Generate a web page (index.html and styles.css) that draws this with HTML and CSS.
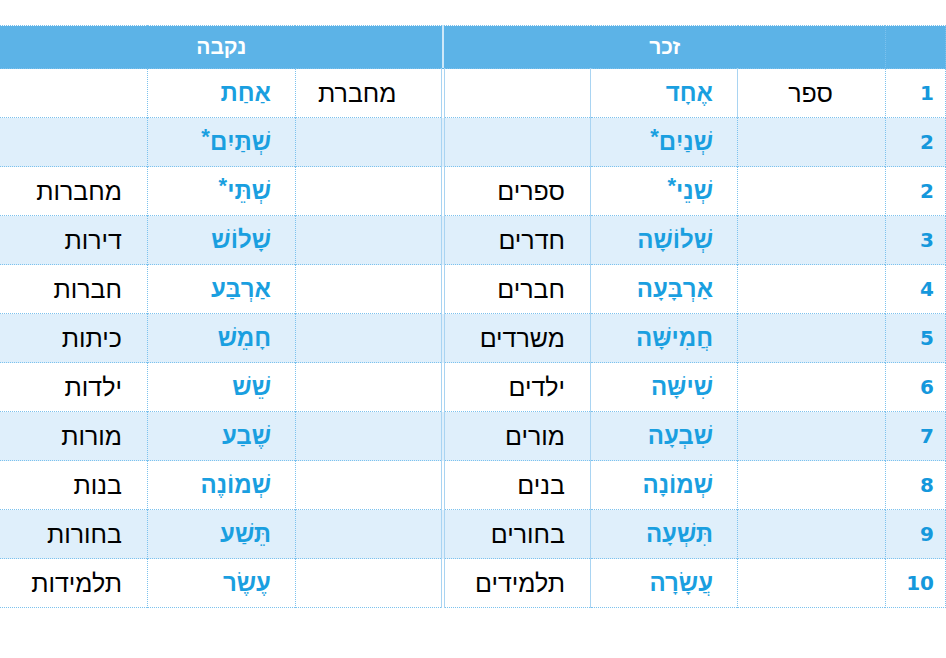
FILE: index.html
```html
<!DOCTYPE html>
<html lang="he" dir="rtl">
<head>
<meta charset="utf-8">
<title>מספרים</title>
<link rel="stylesheet" href="styles.css">
</head>
<body>
<table class="nums">
  <colgroup>
    <col class="c-num">
    <col class="c-m1">
    <col class="c-m2">
    <col class="c-m3">
    <col class="c-f1">
    <col class="c-f2">
    <col class="c-f3">
  </colgroup>
  <thead>
    <tr>
      <th class="num"></th>
      <th colspan="3" class="grp masc">זכר</th>
      <th colspan="3" class="grp">נקבה</th>
    </tr>
  </thead>
  <tbody>
    <tr>
      <td class="num">1</td>
      <td class="noun sg-m">ספר</td>
      <td class="hn m">אֶחָד</td>
      <td class="noun m3"></td>
      <td class="noun sg-f">מחברת</td>
      <td class="hn">אַחַת</td>
      <td class="noun"></td>
    </tr>
    <tr class="alt">
      <td class="num">2</td>
      <td class="noun"></td>
      <td class="hn m">שְׁנַיִם<sup>*</sup></td>
      <td class="noun m3"></td>
      <td class="noun sg-f"></td>
      <td class="hn">שְׁתַּיִם<sup>*</sup></td>
      <td class="noun"></td>
    </tr>
    <tr>
      <td class="num">2</td>
      <td class="noun"></td>
      <td class="hn m">שְׁנֵי<sup>*</sup></td>
      <td class="noun m3">ספרים</td>
      <td class="noun sg-f"></td>
      <td class="hn">שְׁתֵּי<sup>*</sup></td>
      <td class="noun">מחברות</td>
    </tr>
    <tr class="alt">
      <td class="num">3</td>
      <td class="noun"></td>
      <td class="hn m">שְׁלוֹשָׁה</td>
      <td class="noun m3">חדרים</td>
      <td class="noun sg-f"></td>
      <td class="hn">שָׁלוֹשׁ</td>
      <td class="noun">דירות</td>
    </tr>
    <tr>
      <td class="num">4</td>
      <td class="noun"></td>
      <td class="hn m">אַרְבָּעָה</td>
      <td class="noun m3">חברים</td>
      <td class="noun sg-f"></td>
      <td class="hn">אַרְבַּע</td>
      <td class="noun">חברות</td>
    </tr>
    <tr class="alt">
      <td class="num">5</td>
      <td class="noun"></td>
      <td class="hn m">חֲמִישָּׁה</td>
      <td class="noun m3">משרדים</td>
      <td class="noun sg-f"></td>
      <td class="hn">חָמֵשׁ</td>
      <td class="noun">כיתות</td>
    </tr>
    <tr>
      <td class="num">6</td>
      <td class="noun"></td>
      <td class="hn m">שִׁישָּׁה</td>
      <td class="noun m3">ילדים</td>
      <td class="noun sg-f"></td>
      <td class="hn">שֵׁשׁ</td>
      <td class="noun">ילדות</td>
    </tr>
    <tr class="alt">
      <td class="num">7</td>
      <td class="noun"></td>
      <td class="hn m">שִׁבְעָה</td>
      <td class="noun m3">מורים</td>
      <td class="noun sg-f"></td>
      <td class="hn">שֶׁבַע</td>
      <td class="noun">מורות</td>
    </tr>
    <tr>
      <td class="num">8</td>
      <td class="noun"></td>
      <td class="hn m">שְׁמוֹנָה</td>
      <td class="noun m3">בנים</td>
      <td class="noun sg-f"></td>
      <td class="hn">שְׁמוֹנֶה</td>
      <td class="noun">בנות</td>
    </tr>
    <tr class="alt">
      <td class="num">9</td>
      <td class="noun"></td>
      <td class="hn m">תִּשְׁעָה</td>
      <td class="noun m3">בחורים</td>
      <td class="noun sg-f"></td>
      <td class="hn">תֵּשַׁע</td>
      <td class="noun">בחורות</td>
    </tr>
    <tr>
      <td class="num">10</td>
      <td class="noun"></td>
      <td class="hn m">עֲשָׂרָה</td>
      <td class="noun m3">תלמידים</td>
      <td class="noun sg-f"></td>
      <td class="hn">עֶשֶׂר</td>
      <td class="noun">תלמידות</td>
    </tr>
  </tbody>
</table>
</body>
</html>
```

FILE: styles.css
```css
html, body {
  margin: 0;
  padding: 0;
  background: #ffffff;
}

body {
  padding-top: 25px;
  font-family: "Liberation Sans", Arial, sans-serif;
}

.nums {
  direction: rtl;
  border-collapse: collapse;
  table-layout: fixed;
  width: 946px;
}

.c-num { width: 60px; }
.c-m1 { width: 148px; }
.c-m2 { width: 147px; }
.c-m3 { width: 147px; }
.c-f1 { width: 148px; }
.c-f2 { width: 148px; }
.c-f3 { width: 148px; }

.nums th,
.nums td {
  border: 1px dotted #7cc2ee;
  padding: 0;
  box-sizing: border-box;
}

.nums thead tr {
  height: 43px;
  background: #5cb3e7;
}

.nums th {
  color: #ffffff;
  font-weight: bold;
  font-size: 21px;
  text-align: center;
  vertical-align: middle;
}

.nums th.masc {
  border-left: 2px solid #cfe8f8;
}

.nums tbody tr {
  height: 49px;
}

.nums tbody tr.alt {
  background: #dfeffb;
}

.nums td {
  vertical-align: middle;
  text-align: right;
}

.nums td.num {
  color: #1598dc;
  font-family: "DejaVu Sans", Verdana, sans-serif;
  font-weight: bold;
  font-size: 20px;
  padding-right: 11px;
  text-align: right;
}

.nums td.noun {
  color: #000000;
  font-size: 25px;
  padding-right: 25px;
}

.nums td.sg-m {
  border-left: 1px solid #a9d4f2;
  padding-right: 52px;
}

.nums td.sg-f {
  padding-right: 45px;
  border-right: 4px double #a9d4f2;
}

.nums td.m3 {
  border-right: 1px solid #a9d4f2;
}

.nums td.hn {
  color: #1a9fe0;
  font-weight: bold;
  font-size: 24px;
  padding-right: 24px;
}

.nums td.hn sup {
  font-size: 22px;
  line-height: 0;
  position: relative;
  top: 3px;
  padding-left: 1px;
}
```
